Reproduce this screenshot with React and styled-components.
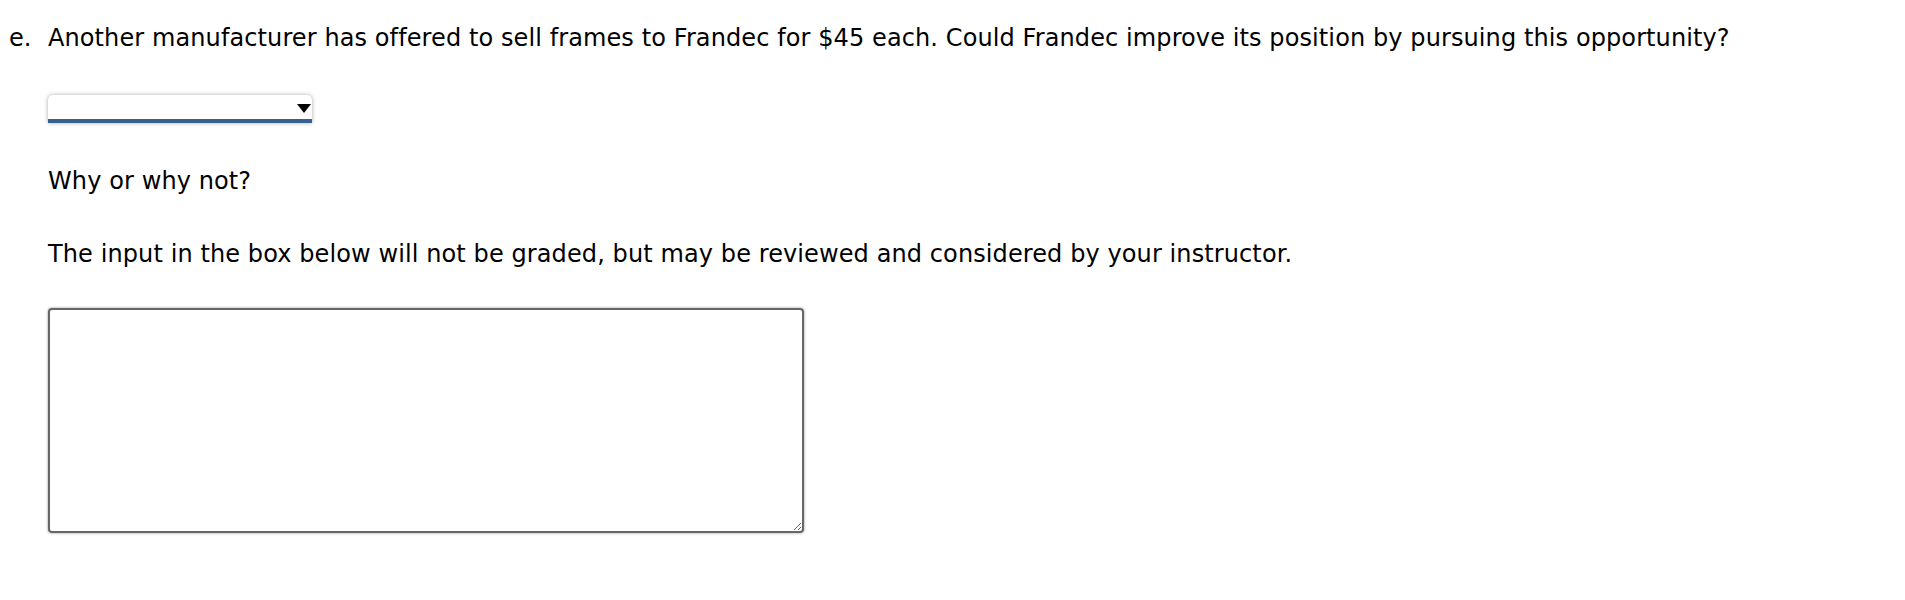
import React from 'react'
import styled, { createGlobalStyle } from 'styled-components'

const Global = createGlobalStyle`
  body {
    margin: 0;
    background: #fff;
    color: #000;
    font-family: "DejaVu Sans", Verdana, sans-serif;
    font-size: 24px;
    letter-spacing: 0.1px;
  }
`

const Page = styled.div`
  padding: 26px 0 40px 9px;
`

const Question = styled.div`
  display: grid;
  grid-template-columns: 39px 1fr;
  line-height: 24px;
`

const Marker = styled.span``

const Body = styled.div`
  display: flex;
  flex-direction: column;
  align-items: flex-start;
`

const Prompt = styled.p`
  margin: 0;
  white-space: nowrap;
`

const Para = styled.p`
  margin: ${p => p.$top}px 0 0;
`

const SelectWrap = styled.div`
  position: relative;
  margin-top: 45px;
  width: 264px;
  height: 28px;
`

const Dropdown = styled.select`
  appearance: none;
  width: 100%;
  height: 100%;
  box-sizing: border-box;
  border: none;
  border-bottom: 4px solid #36618e;
  border-radius: 5px 5px 0 0;
  background: #fff;
  box-shadow: 0 0 4px rgba(0, 0, 0, 0.35);
  font: inherit;
  outline: none;
`

const Arrow = styled.svg`
  position: absolute;
  right: 1px;
  top: 9px;
  pointer-events: none;
`

const Notes = styled.textarea`
  margin-top: 42px;
  width: 756px;
  height: 225px;
  box-sizing: border-box;
  border: 2px solid #666;
  border-radius: 4px;
  box-shadow: 0 0 3px rgba(0, 0, 0, 0.4);
  font: inherit;
  padding: 4px;
`

export default function App() {
  return (
    <>
      <Global />
      <Page>
        <Question>
          <Marker>e.</Marker>
          <Body>
            <Prompt>
              Another manufacturer has offered to sell frames to Frandec for $45 each. Could Frandec improve its position by pursuing this opportunity?
            </Prompt>
            <SelectWrap>
              <Dropdown defaultValue="">
                <option value=""></option>
                <option value="yes">Yes</option>
                <option value="no">No</option>
              </Dropdown>
              <Arrow width="14" height="9" viewBox="0 0 14 9">
                <path d="M0 0 H14 L7 9 Z" fill="#000" />
              </Arrow>
            </SelectWrap>
            <Para $top={46}>Why or why not?</Para>
            <Para $top={49}>The input in the box below will not be graded, but may be reviewed and considered by your instructor.</Para>
            <Notes />
          </Body>
        </Question>
      </Page>
    </>
  )
}
